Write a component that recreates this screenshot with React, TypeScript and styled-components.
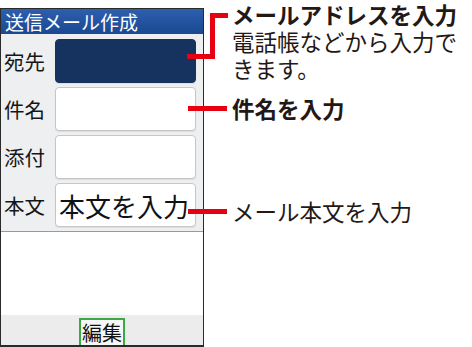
import styled, { createGlobalStyle } from "styled-components";

const GlobalStyle = createGlobalStyle`
    html, body {
        margin: 0;
        padding: 0;
        background: #ffffff;
    }
    body {
        font-family: "Noto Sans CJK JP", "Noto Sans", sans-serif;
        color: #231815;
    }
`;

const Page = styled.div`
    position: relative;
    width: 472px;
    height: 347px;
    display: flex;
    flex-direction: row;
    overflow: hidden;
`;

const Phone = styled.div`
    box-sizing: border-box;
    width: 204px;
    height: 339px;
    margin-top: 8px;
    border: 1.5px solid #2a2a2a;
    border-bottom-width: 2px;
    display: flex;
    flex-direction: column;
    background: #ffffff;
`;

const TitleBar = styled.div`
    height: 25px;
    padding-left: 4px;
    background: linear-gradient(#2d5fae, #1b4891);
    color: #ffffff;
    font-size: 19px;
    line-height: 25px;
    white-space: nowrap;
`;

const Form = styled.div`
    background: #edeff1;
    padding: 5px 7px 4px 3px;
    display: flex;
    flex-direction: column;
    gap: 4px;
    border-bottom: 1px solid #9a9a9a;
`;

const Row = styled.div`
    display: flex;
    flex-direction: row;
    align-items: center;
    height: 44px;
`;

const Label = styled.span`
    width: 51px;
    font-size: 20.5px;
    line-height: 1;
    color: #151515;
`;

const Field = styled.div<{ $active?: boolean }>`
    box-sizing: border-box;
    flex: 1;
    height: 100%;
    border-radius: 4px;
    border: 1px solid ${({ $active }) => ($active ? "#16325f" : "#c4c6c8")};
    background: ${({ $active }) => ($active ? "#16325f" : "#ffffff")};
    box-shadow: 0 1px 1px rgba(0, 0, 0, 0.08);
    display: flex;
    align-items: center;
    padding-left: 3px;
    overflow: hidden;
    white-space: nowrap;
    font-size: 26px;
    color: #111111;
`;

const Blank = styled.div`
    flex: 1;
    background: #ffffff;
`;

const SoftBar = styled.div`
    height: 30px;
    background: #ececec;
    display: flex;
    justify-content: center;
    align-items: flex-end;
`;

const SoftKey = styled.div`
    box-sizing: border-box;
    width: 46px;
    height: 27px;
    border: 2px solid #3aaa48;
    border-bottom: none;
    background: #f7f7f7;
    font-size: 20px;
    line-height: 25px;
    text-align: center;
    color: #111111;
`;

const Notes = styled.div`
    margin-left: 28px;
    display: flex;
    flex-direction: column;
    padding-top: 1px;
`;

const Note = styled.div<{ $gap: number }>`
    margin-top: ${({ $gap }) => $gap}px;
    font-size: 22.5px;
    line-height: 27px;
    white-space: nowrap;
`;

const Strong = styled.div`
    font-weight: 700;
`;

const Leaders = styled.svg`
    position: absolute;
    left: 0;
    top: 0;
    pointer-events: none;
`;

export default function App() {
    return (
        <Page>
            <GlobalStyle />
            <Phone>
                <TitleBar>送信メール作成</TitleBar>
                <Form>
                    <Row>
                        <Label>宛先</Label>
                        <Field $active />
                    </Row>
                    <Row>
                        <Label>件名</Label>
                        <Field />
                    </Row>
                    <Row>
                        <Label>添付</Label>
                        <Field />
                    </Row>
                    <Row>
                        <Label>本文</Label>
                        <Field>本文を入力</Field>
                    </Row>
                </Form>
                <Blank />
                <SoftBar>
                    <SoftKey>編集</SoftKey>
                </SoftBar>
            </Phone>
            <Notes>
                <Note $gap={0}>
                    <Strong>メールアドレスを入力</Strong>
                    <div>電話帳などから入力で</div>
                    <div>きます。</div>
                </Note>
                <Note $gap={13}>
                    <Strong>件名を入力</Strong>
                </Note>
                <Note $gap={76}>メール本文を入力</Note>
            </Notes>
            <Leaders width="472" height="347" viewBox="0 0 472 347">
                <g fill="none" stroke="#e60012" strokeWidth="5" strokeLinejoin="miter">
                    <polyline points="187,56.5 212.5,56.5 212.5,15.5 228,15.5" />
                    <line x1="188" y1="108.5" x2="227" y2="108.5" />
                    <line x1="188" y1="211.5" x2="227" y2="211.5" />
                </g>
            </Leaders>
        </Page>
    );
}
